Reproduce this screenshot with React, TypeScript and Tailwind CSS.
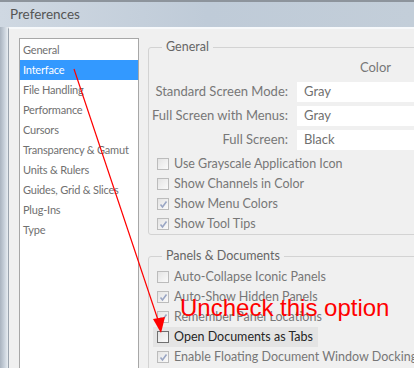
import React from 'react'

const listItems = [
  'General',
  'Interface',
  'File Handling',
  'Performance',
  'Cursors',
  'Transparency & Gamut',
  'Units & Rulers',
  'Guides, Grid & Slices',
  'Plug-Ins',
  'Type',
]

const modes = [
  { label: 'Standard Screen Mode:', value: 'Gray' },
  { label: 'Full Screen with Menus:', value: 'Gray' },
  { label: 'Full Screen:', value: 'Black' },
]

const generalChecks = [
  { label: 'Use Grayscale Application Icon', checked: false },
  { label: 'Show Channels in Color', checked: false },
  { label: 'Show Menu Colors', checked: true },
  { label: 'Show Tool Tips', checked: true },
]

const panelChecks = [
  { label: 'Auto-Collapse Iconic Panels', checked: false },
  { label: 'Auto-Show Hidden Panels', checked: true },
  { label: 'Remember Panel Locations', checked: true },
  { label: 'Open Documents as Tabs', checked: false, active: true },
  { label: 'Enable Floating Document Window Docking', checked: true },
]

function Check({ checked, active }: { checked: boolean; active?: boolean }) {
  return (
    <span
      className={`flex h-[12px] w-[12px] shrink-0 items-center justify-center border bg-gradient-to-br from-[#e4e4e4] to-[#fafafa] ${
        active ? 'border-[#6f6f6f]' : 'border-[#bcbcbc]'
      }`}
    >
      {checked && (
        <svg width="9" height="9" viewBox="0 0 9 9">
          <path d="M1.5 4.5 L3.5 7 L7.5 1.5" fill="none" stroke="#9aa6c4" strokeWidth="1.6" />
        </svg>
      )}
    </span>
  )
}

function CheckRow({ label, checked, active }: { label: string; checked: boolean; active?: boolean }) {
  return (
    <div
      className={`flex h-[20px] items-center gap-[5px] text-[12.5px] ${
        active ? 'ml-[4px] w-[165px] bg-[#e4e4e4] pl-[4px] text-[#262626]' : 'pl-[8px] text-[#777]'
      }`}
    >
      <Check checked={checked} active={active} />
      <span className="whitespace-nowrap">{label}</span>
    </div>
  )
}

export default function App() {
  return (
    <div className="relative h-[368px] w-[414px] overflow-hidden bg-[#c9d3de] font-['Lato',sans-serif] text-[13px]">
      {/* Title bar */}
      <div className="flex h-[27px] items-center border-t-2 border-[#8d949c] bg-gradient-to-r from-[#cfd8e2] via-[#bfcbd8] to-[#c3ced9] pl-[10px] text-[13.5px] text-[#555]">
        Preferences
      </div>

      <div className="flex h-full">
        <div className="w-[8px] shrink-0 bg-gradient-to-r from-[#a9b3bf] via-[#c6cfd9] to-[#e8edf2]" />

        <div className="flex flex-1 gap-[9px] border-l border-t-2 border-l-[#9aa3ad] border-t-[#f7f9fb] bg-[#f0f0f0] pl-[10px] pt-[9px]">
          {/* Category list */}
          <div className="h-[340px] w-[120px] shrink-0 border border-[#a7a7a7] bg-white pt-[1px]">
            {listItems.map((item) => (
              <div
                key={item}
                className={`flex h-[20px] items-center whitespace-nowrap px-[3px] text-[11px] tracking-[-0.2px] ${
                  item === 'Interface' ? 'bg-[#3399ff] text-white' : 'text-[#707070]'
                }`}
              >
                {item}
              </div>
            ))}
          </div>

          {/* Settings */}
          <div className="flex w-[290px] shrink-0 flex-col gap-[13px] pt-[1px]">
            <fieldset className="h-[196px] rounded-[3px] border border-[#d3d3d3]">
              <legend className="ml-[13px] px-[4px] text-[12.5px] leading-[16px] text-[#666]">General</legend>
              <div className="pr-[46px] pt-[3px] text-right leading-[18px] text-[#777]">Color</div>
              <div className="mt-[6px] flex flex-col gap-[4px]">
                {modes.map((m) => (
                  <div key={m.label} className="flex h-[20px] items-center gap-[9px]">
                    <span className="w-[139px] whitespace-nowrap text-right text-[#777]">{m.label}</span>
                    <span className="flex h-[20px] flex-1 items-center bg-white pl-[7px] text-[#6f6f6f]">
                      {m.value}
                    </span>
                  </div>
                ))}
              </div>
              <div className="mt-[4px] flex flex-col">
                {generalChecks.map((c) => (
                  <CheckRow key={c.label} {...c} />
                ))}
              </div>
            </fieldset>

            <fieldset className="h-[140px] rounded-[3px] border border-[#d3d3d3]">
              <legend className="ml-[13px] px-[4px] text-[12.5px] leading-[16px] text-[#666]">
                Panels &amp; Documents
              </legend>
              <div className="mt-[3px] flex flex-col">
                {panelChecks.map((c) => (
                  <CheckRow key={c.label} {...c} />
                ))}
              </div>
            </fieldset>
          </div>
        </div>
      </div>

      {/* Annotation */}
      <div className="absolute left-[180px] top-[293px] font-['Liberation_Sans',Arial,sans-serif] text-[24px] leading-[30px] text-[#ff0000]">
        Uncheck this option
      </div>
      <svg className="pointer-events-none absolute left-0 top-0" width="414" height="368">
        <line x1="74" y1="69" x2="158" y2="320" stroke="#ff0000" strokeWidth="1.2" />
        <polygon points="161,333 153,319 165,317" fill="#ff0000" />
      </svg>
    </div>
  )
}
